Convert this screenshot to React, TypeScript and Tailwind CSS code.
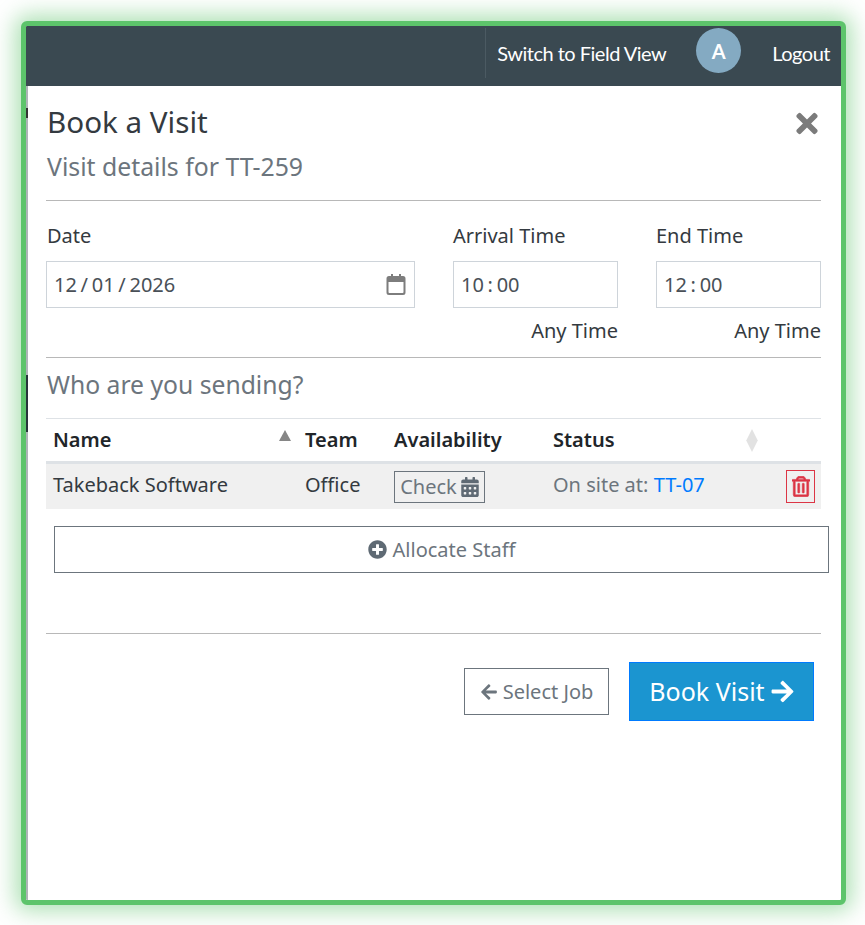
import React from 'react';
import { FaArrowLeft, FaArrowRight, FaCalendarAlt, FaPlusCircle, FaRegTrashAlt, FaTimes } from 'react-icons/fa';

const labelCls = 'h-[30px] text-[20px] leading-[30px] text-[#343a40]';
const inputCls = 'mt-[10px] flex h-[47px] items-center border border-[#ced4da] pl-[7px] text-[20px] text-[#495057] [word-spacing:-1.5px]';

const TimeField = ({ label, value }: { label: string; value: string }) => (
  <div className="w-[165px]">
    <div className={labelCls}>{label}</div>
    <div className={inputCls}>{value}</div>
    <div className="mt-[8px] h-[30px] text-right text-[20px] leading-[30px] text-[#343a40]">Any Time</div>
  </div>
);

const App = () => {
  return (
    <div className="h-[925px] w-[865px] bg-white p-[21px] font-['Noto_Sans','Open_Sans',sans-serif]">
      <div className="flex h-[884px] w-[825px] flex-col overflow-hidden rounded-[6px] border-[5px] border-[#5dc46b] bg-white shadow-[0_0_22px_6px_rgba(93,196,107,0.5)]">
        {/* top bar */}
        <div className="flex h-[60px] shrink-0 items-center justify-end bg-[#3a4951] font-['Lato',sans-serif] text-[20px] tracking-[-0.5px] text-white">
          <div className="mb-[6px] flex h-[50px] items-center border-l border-[#4b5a62] pl-[11px]">Switch to Field View</div>
          <div className="mb-[11px] ml-[30px] flex h-[45px] w-[45px] items-center justify-center rounded-full bg-[#84aac2] text-[20px] font-bold tracking-normal">A</div>
          <div className="mb-[6px] ml-[31px] mr-[11px]">Logout</div>
        </div>

        <div className="flex min-h-0 flex-1">
          {/* bit of the page showing behind the modal */}
          <div className="w-[2px] shrink-0 bg-[#aeb4b7]">
            <div className="mt-[22px] h-[10px] bg-[#333333]" />
            <div className="mt-[257px] h-[57px] bg-[#27343b]" />
          </div>

          <div className="w-[793px] shrink-0 pl-[18px]">
            <div className="flex items-start justify-between">
              <div className="pl-px">
                <div className="mt-[15px] text-[29.6px] leading-[42px] text-[#343a40]">Book a Visit</div>
                <div className="mt-px text-[24.8px] leading-[44px] text-[#6c757d]">Visit details for TT-259</div>
              </div>
              <FaTimes className="mr-[2px] mt-[22px] h-[31px] w-[24px] text-[#7b7b7b]" />
            </div>

            <div className="mt-[12px] border-t border-[#b8b8b8]" />

            {/* date and time */}
            <div className="mt-[20px] flex">
              <div className="w-[369px]">
                <div className={`${labelCls} pl-px`}>Date</div>
                <div className={`${inputCls} justify-between pr-[8px]`}>
                  <span>12 / 01 / 2026</span>
                  <svg viewBox="0 0 20 21" className="h-[21px] w-[20px]" aria-hidden="true">
                    <path d="M5 0h2v3H5zM13 0h2v3h-2z" fill="#7d7d7d" />
                    <path d="M3 2h14a2.5 2.5 0 0 1 2.5 2.5v14A2.5 2.5 0 0 1 17 21H3a2.5 2.5 0 0 1-2.5-2.5v-14A2.5 2.5 0 0 1 3 2zm-.5 6v10.2c0 .6.4.8.8.8h13.4c.4 0 .8-.2.8-.8V8z" fill="#7d7d7d" fillRule="evenodd" />
                  </svg>
                </div>
              </div>
              <div className="ml-[38px]">
                <TimeField label="Arrival Time" value="10 : 00" />
              </div>
              <div className="ml-[38px]">
                <TimeField label="End Time" value="12 : 00" />
              </div>
            </div>

            <div className="mt-[11px] border-t border-[#b8b8b8]" />
            <div className="mt-[8px] pl-px text-[24.7px] leading-[38px] text-[#6c757d]">Who are you sending?</div>

            {/* staff table */}
            <div className="mt-[14px] border-t border-[#dee2e6]">
              <div className="grid h-[45px] grid-cols-[252px_90px_158px_1fr] items-center border-b-[3px] border-[#dee2e6] text-[20px] font-semibold text-[#212529]">
                <div className="flex items-center justify-between pl-[7px]">
                  <span>Name</span>
                  <span className="mb-[10px] mr-[7px] h-0 w-0 border-x-[6px] border-b-[11px] border-x-transparent border-b-[#868686]" />
                </div>
                <div className="pl-[7px]">Team</div>
                <div className="pl-[6px]">Availability</div>
                <div className="flex items-center pl-[7px]">
                  <span>Status</span>
                  <svg viewBox="0 0 12 24" className="ml-[131px] h-[23px] w-[12px]" aria-hidden="true">
                    <path d="M6 0l6 12-6 12-6-12z" fill="#e2e2e2" />
                  </svg>
                </div>
              </div>
              <div className="grid h-[45px] grid-cols-[252px_90px_158px_1fr] items-center bg-[#f0f0f0] text-[20px] text-[#343a40]">
                <div className="mb-[3px] pl-[7px]">Takeback Software</div>
                <div className="mb-[3px] pl-[7px]">Office</div>
                <div className="pl-[6px]">
                  <div className="flex h-[32px] w-[91px] items-center justify-center gap-[4px] border border-[#6c757d] text-[#6c757d]">
                    Check <FaCalendarAlt className="h-[20px] w-[18px] text-[#5f6a74]" />
                  </div>
                </div>
                <div className="flex items-center justify-between pl-[7px] pr-[6px]">
                  <span className="mb-[3px] text-[#6c757d]">
                    On site at: <span className="text-[#007bff]">TT-07</span>
                  </span>
                  <div className="flex h-[33px] w-[29px] items-center justify-center border border-[#dc3545] text-[#dc3545]">
                    <FaRegTrashAlt className="h-[21px] w-[18px]" stroke="currentColor" strokeWidth={14} />
                  </div>
                </div>
              </div>
            </div>

            <div className="ml-[8px] mt-[17px] flex h-[47px] w-[775px] items-center justify-center gap-[6px] border border-[#6c757d] text-[20px] text-[#6c757d]">
              <FaPlusCircle className="h-[19px] w-[19px] text-[#5f6a74]" /> Allocate Staff
            </div>

            <div className="mt-[60px] border-t border-[#b8b8b8]" />

            {/* footer buttons */}
            <div className="mr-[7px] mt-[28px] flex items-center justify-end gap-[20px]">
              <div className="flex h-[47px] w-[145px] items-center justify-center gap-[5px] border border-[#6c757d] text-[20px] text-[#6c757d]">
                <FaArrowLeft className="h-[18px] w-[18px]" /> Select Job
              </div>
              <div className="flex h-[59px] w-[185px] items-center justify-center gap-[5px] border border-[#007bff] bg-[#1b95d0] pl-px text-[25px] text-white">
                Book Visit <FaArrowRight className="h-[25px] w-[25px]" />
              </div>
            </div>
          </div>
        </div>
      </div>
    </div>
  );
};

export default App;
